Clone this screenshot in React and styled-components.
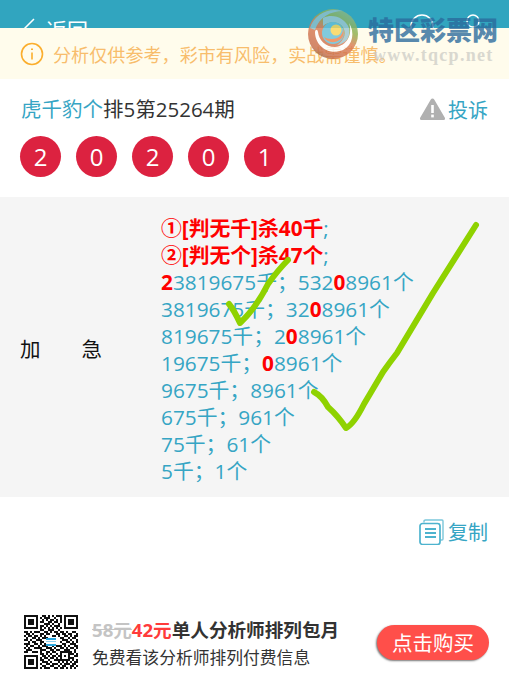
import React from "react";
import styled, { createGlobalStyle } from "styled-components";

const teal = "#36a5c4";
const font = `"Open Sans", "Noto Sans CJK SC", sans-serif`;

const GlobalStyle = createGlobalStyle`
  html, body {
    margin: 0;
    padding: 0;
    background: #fff;
    font-family: ${font};
  }
`;

const Page = styled.div`
  position: relative;
  width: 509px;
  height: 677px;
  overflow: hidden;
  background: #fff;
  display: flex;
  flex-direction: column;
`;
const Header = styled.div`
  height: 28px;
  flex: none;
  background: #31a5bf;
  color: #fff;
  overflow: hidden;
  padding: 16px 29px 0 23px;
  box-sizing: border-box;
  font-size: 21px;
  line-height: 28px;
  display: flex;
  align-items: flex-start;
  gap: 11px;
`;
const HeaderIcons = styled.div`
  margin: -2px 0 0 auto;
  display: flex;
  gap: 32px;
`;
const Notice = styled.div`
  height: 51px;
  flex: none;
  background: #fffcec;
  color: #f8bd6c;
  font-size: 18.1px;
  display: flex;
  align-items: center;
  gap: 9px;
  padding-left: 20px;
`;
const TitleRow = styled.div`
  display: flex;
  justify-content: space-between;
  align-items: center;
  padding: 15px 21px 0 21px;
  height: 30px;
  font-size: 20.5px;
  color: #333;
`;
const Title = styled.div`
  line-height: 30px;
`;
const TealText = styled.span`
  color: ${teal};
`;
const Complain = styled.div`
  display: flex;
  align-items: center;
  gap: 2px;
  color: ${teal};
  font-size: 20px;
`;
const Balls = styled.div`
  display: flex;
  gap: 15px;
  padding: 12px 0 0 20px;
`;
const Ball = styled.div`
  width: 41px;
  height: 41px;
  border-radius: 50%;
  background: #dc2240;
  color: #fff;
  font-size: 24px;
  display: flex;
  align-items: center;
  justify-content: center;
`;
const Panel = styled.div`
  margin-top: 20px;
  height: 300px;
  flex: none;
  box-sizing: border-box;
  background: #f5f5f5;
  display: flex;
  align-items: center;
`;
const PanelLabel = styled.div`
  width: 161px;
  padding: 2px 0 0 20px;
  box-sizing: border-box;
  flex: none;
  font-size: 20.5px;
  color: #111;
  display: flex;
  gap: 41px;
`;
const Lines = styled.div`
  font-size: 20.8px;
  line-height: 27px;
  padding-top: 6px;
  color: ${teal};
  white-space: nowrap;
`;
const Strong = styled.b`
  color: #f00;
  font-weight: 700;
`;
const CopyRow = styled.div`
  display: flex;
  justify-content: flex-end;
  align-items: center;
  gap: 4px;
  padding: 20px 21px 0 0;
  font-size: 20px;
  color: ${teal};
`;
const Promo = styled.div`
  margin-top: auto;
  display: flex;
  align-items: center;
  padding: 0 20px 5px 24px;
`;
const PromoText = styled.div`
  margin-left: 14px;
  padding-top: 4px;
  flex: 1;
  color: #333;
`;
const PromoTitle = styled.div`
  font-size: 18.6px;
  font-weight: 700;
  line-height: 28px;
`;
const OldPrice = styled.s`
  color: #c4c4c4;
`;
const NewPrice = styled.span`
  color: #ff3b3b;
`;
const PromoSub = styled.div`
  font-size: 16.8px;
  line-height: 28px;
`;
const BuyButton = styled.button`
  width: 112px;
  height: 35px;
  border: none;
  border-radius: 18px;
  background: #ff4f4a;
  color: #fff;
  font: 20.5px ${font};
  padding: 0;
  box-shadow: -1px 1px 2px #777;
`;

const Watermark = styled.div`
  position: absolute;
  left: 307px;
  top: 8px;
  width: 202px;
  height: 62px;
  pointer-events: none;
`;
const WatermarkName = styled.div`
  position: absolute;
  left: 61px;
  top: 6px;
  font-size: 26px;
  line-height: 32px;
  font-weight: 900;
  color: #2a6a9c;
  opacity: 0.78;
  white-space: nowrap;
`;
const WatermarkUrl = styled.div`
  position: absolute;
  left: 66px;
  top: 36px;
  font: 700 18px/22px "Liberation Serif", serif;
  letter-spacing: 1.3px;
  color: #c9c9c4;
  opacity: 0.7;
  white-space: nowrap;
`;
const Ticks = styled.svg`
  position: absolute;
  left: 0;
  top: 0;
  pointer-events: none;
`;

const InfoIcon = () => (
  <svg width="24" height="24" viewBox="0 0 24 24" fill="none" stroke="#fbae2d" strokeWidth="1.6">
    <circle cx="12" cy="12" r="10.5" />
    <path d="M12 10.5v7" />
    <path d="M12 6.5v1.6" strokeWidth="2" />
  </svg>
);

const WarnIcon = () => (
  <svg width="27" height="24" viewBox="0 0 27 24">
    <path d="M13.5 1.5 Q14.6 1.5 15.2 2.6 L26 21 Q26.6 23 24.7 23 L2.3 23 Q.4 23 1 21 L11.8 2.6 Q12.4 1.5 13.5 1.5Z" fill="#b0b0b0" />
    <rect x="12.2" y="8" width="2.6" height="8" fill="#fff" />
    <rect x="12.2" y="17.6" width="2.6" height="2.8" fill="#fff" />
  </svg>
);

const CopyIcon = () => (
  <svg width="25" height="26" viewBox="0 0 25 26" fill="none" stroke="#4db3ce" strokeWidth="1.4">
    <path d="M5 3.5 V2.2 Q5 1 6.5 1 H23 Q24 1 24 2 V20 Q24 21 23 21 H21.5" opacity=".75" />
    <rect x="1" y="4.5" width="20" height="21" rx="2.5" strokeWidth="1.7" />
    <path d="M6 10h11M6 14h11M6 18h11" strokeWidth="2" />
  </svg>
);

const Logo = () => (
  <svg width="52" height="52" viewBox="0 0 52 52" style={{ position: "absolute", left: 0, top: 0, opacity: 0.82 }}>
    <defs>
      <linearGradient id="logoEdge" x1="0.8" y1="0" x2="0.2" y2="1">
        <stop offset="0" stopColor="#86b89a" />
        <stop offset="0.3" stopColor="#8eb04c" />
        <stop offset="0.5" stopColor="#dd7d55" />
        <stop offset="0.85" stopColor="#c96f4e" />
        <stop offset="1" stopColor="#8a6a4c" />
      </linearGradient>
    </defs>
    <circle cx="26" cy="26" r="25" fill="url(#logoEdge)" />
    <path d="M3 20 C7 6 22 -1 36 3 C24 3 12 9 8 22 Z" fill="#8fc0cc" />
    <path d="M8 24 C8 38 22 48 36 42 C46 37 48 24 42 15 C46 26 40 38 28 39 C18 39 12 32 11 24 C10.500 21 8.500 21 8 24Z" fill="#fff" />
    <path d="M16 10 C26 5 38 10 42 20 C44 30 38 36 30 37 C38 32 40 24 35 18 C30 13 22 13 16 18Z" fill="#9cc6d0" />
    <circle cx="26" cy="25" r="11" fill="#66c0dc" />
    <path d="M17 29 C20 36 32 36 36 28 C37 25 37 24 36 21 C36 28 30 31 25 31 C21 31 19 30 17 29Z" fill="#ef8450" />
    <circle cx="29" cy="22" r="5.500" fill="#f8d65c" />
  </svg>
);

// finder squares plus a fixed bit pattern for the code body
const qrRows = [
  "111111100110101011101111111",
  "100000101011100100101000001",
  "101110100101011010101011101",
  "101110101100110110101011101",
  "101110100011101001001011101",
  "100000101101010111001000001",
  "111111101010101010101111111",
  "000000001100111001000000000",
  "110101110011010110110100110",
  "011010001101100011011011001",
  "101101101010001101001101011",
  "010011010111000000110010110",
  "110100111000000000011101001",
  "001011001100000000100110101",
  "111001101010000000011001110",
  "010110010111001011101010011",
  "101001111001110100110101101",
  "011100001110011011001110010",
  "110011101001101100111111010",
  "000000001101010010100011101",
  "111111100110101101101010011",
  "100000101011011010100011100",
  "101110101100100111111110101",
  "101110100111010001010101011",
  "101110101001101110101110110",
  "100000100110011001011001101",
  "111111101011100110110101010",
];

const QrCode = () => (
  <svg width="54" height="54" viewBox="0 0 27 27" shapeRendering="crispEdges">
    {qrRows.map((row, y) =>
      row.split("").map((bit, x) =>
        bit === "1" ? <rect key={`${x}-${y}`} x={x} y={y} width="1" height="1" fill="#111" /> : null
      )
    )}
    <rect x="11" y="11.5" width="5" height="1" fill="#2aa7e0" />
    <rect x="11" y="13" width="5" height=".7" fill="#8fd0ee" />
    <rect x="11" y="14.5" width="5" height="1" fill="#2aa7e0" />
  </svg>
);

const lines = [
  <><Strong>①[判无千]杀40千</Strong>;</>,
  <><Strong>②[判无个]杀47个</Strong>;</>,
  <><Strong>2</Strong>3819675千；532<Strong>0</Strong>8961个</>,
  <>3819675千；32<Strong>0</Strong>8961个</>,
  <>819675千；2<Strong>0</Strong>8961个</>,
  <>19675千；<Strong>0</Strong>8961个</>,
  <>9675千；8961个</>,
  <>675千；961个</>,
  <>75千；61个</>,
  <>5千；1个</>,
];

export default function App() {
  return (
    <Page>
      <GlobalStyle />
      <Header>
        <svg width="12" height="22" viewBox="0 0 12 22" fill="none" stroke="#fff" strokeWidth="1.5">
          <path d="M11 3 L2 12 L11 21" />
        </svg>
        返回
        <HeaderIcons>
          <svg width="24" height="24" viewBox="0 0 24 24" fill="none" stroke="#fff" strokeWidth="1.5">
            <circle cx="12" cy="12" r="11" />
          </svg>
          <svg width="14" height="14" viewBox="0 0 14 14" fill="none" stroke="#fff" strokeWidth="1.5">
            <circle cx="7" cy="7" r="6" />
          </svg>
        </HeaderIcons>
      </Header>
      <Notice>
        <InfoIcon />
        分析仅供参考，彩市有风险，实战需谨慎。
      </Notice>
      <TitleRow>
        <Title>
          <TealText>虎千豹个</TealText>排5第25264期
        </Title>
        <Complain>
          <WarnIcon />
          投诉
        </Complain>
      </TitleRow>
      <Balls>
        {[2, 0, 2, 0, 1].map((n, i) => (
          <Ball key={i}>{n}</Ball>
        ))}
      </Balls>
      <Panel>
        <PanelLabel>
          <span>加</span>
          <span>急</span>
        </PanelLabel>
        <Lines>
          {lines.map((line, i) => (
            <div key={i}>{line}</div>
          ))}
        </Lines>
      </Panel>
      <CopyRow>
        <CopyIcon />
        复制
      </CopyRow>
      <Promo>
        <QrCode />
        <PromoText>
          <PromoTitle>
            <OldPrice>58元</OldPrice>
            <NewPrice>42元</NewPrice>单人分析师排列包月
          </PromoTitle>
          <PromoSub>免费看该分析师排列付费信息</PromoSub>
        </PromoText>
        <BuyButton>点击购买</BuyButton>
      </Promo>
      <Ticks width="509" height="677" fill="none" stroke="#8fd200" strokeLinecap="round" strokeLinejoin="round" strokeWidth="6">
        <path d="M229 304 Q234 310 240 323 Q256 308 268 284 Q278 270 288 260" />
        <path d="M314 392 Q322 396 328 407 Q338 416 346 428 Q354 424 364 404 L383 372 Q390 362 397 353 L433 293 Q455 258 476 225" />
      </Ticks>
      <Watermark>
        <Logo />
        <WatermarkName>特区彩票网</WatermarkName>
        <WatermarkUrl>www.tqcp.net</WatermarkUrl>
      </Watermark>
    </Page>
  );
}
